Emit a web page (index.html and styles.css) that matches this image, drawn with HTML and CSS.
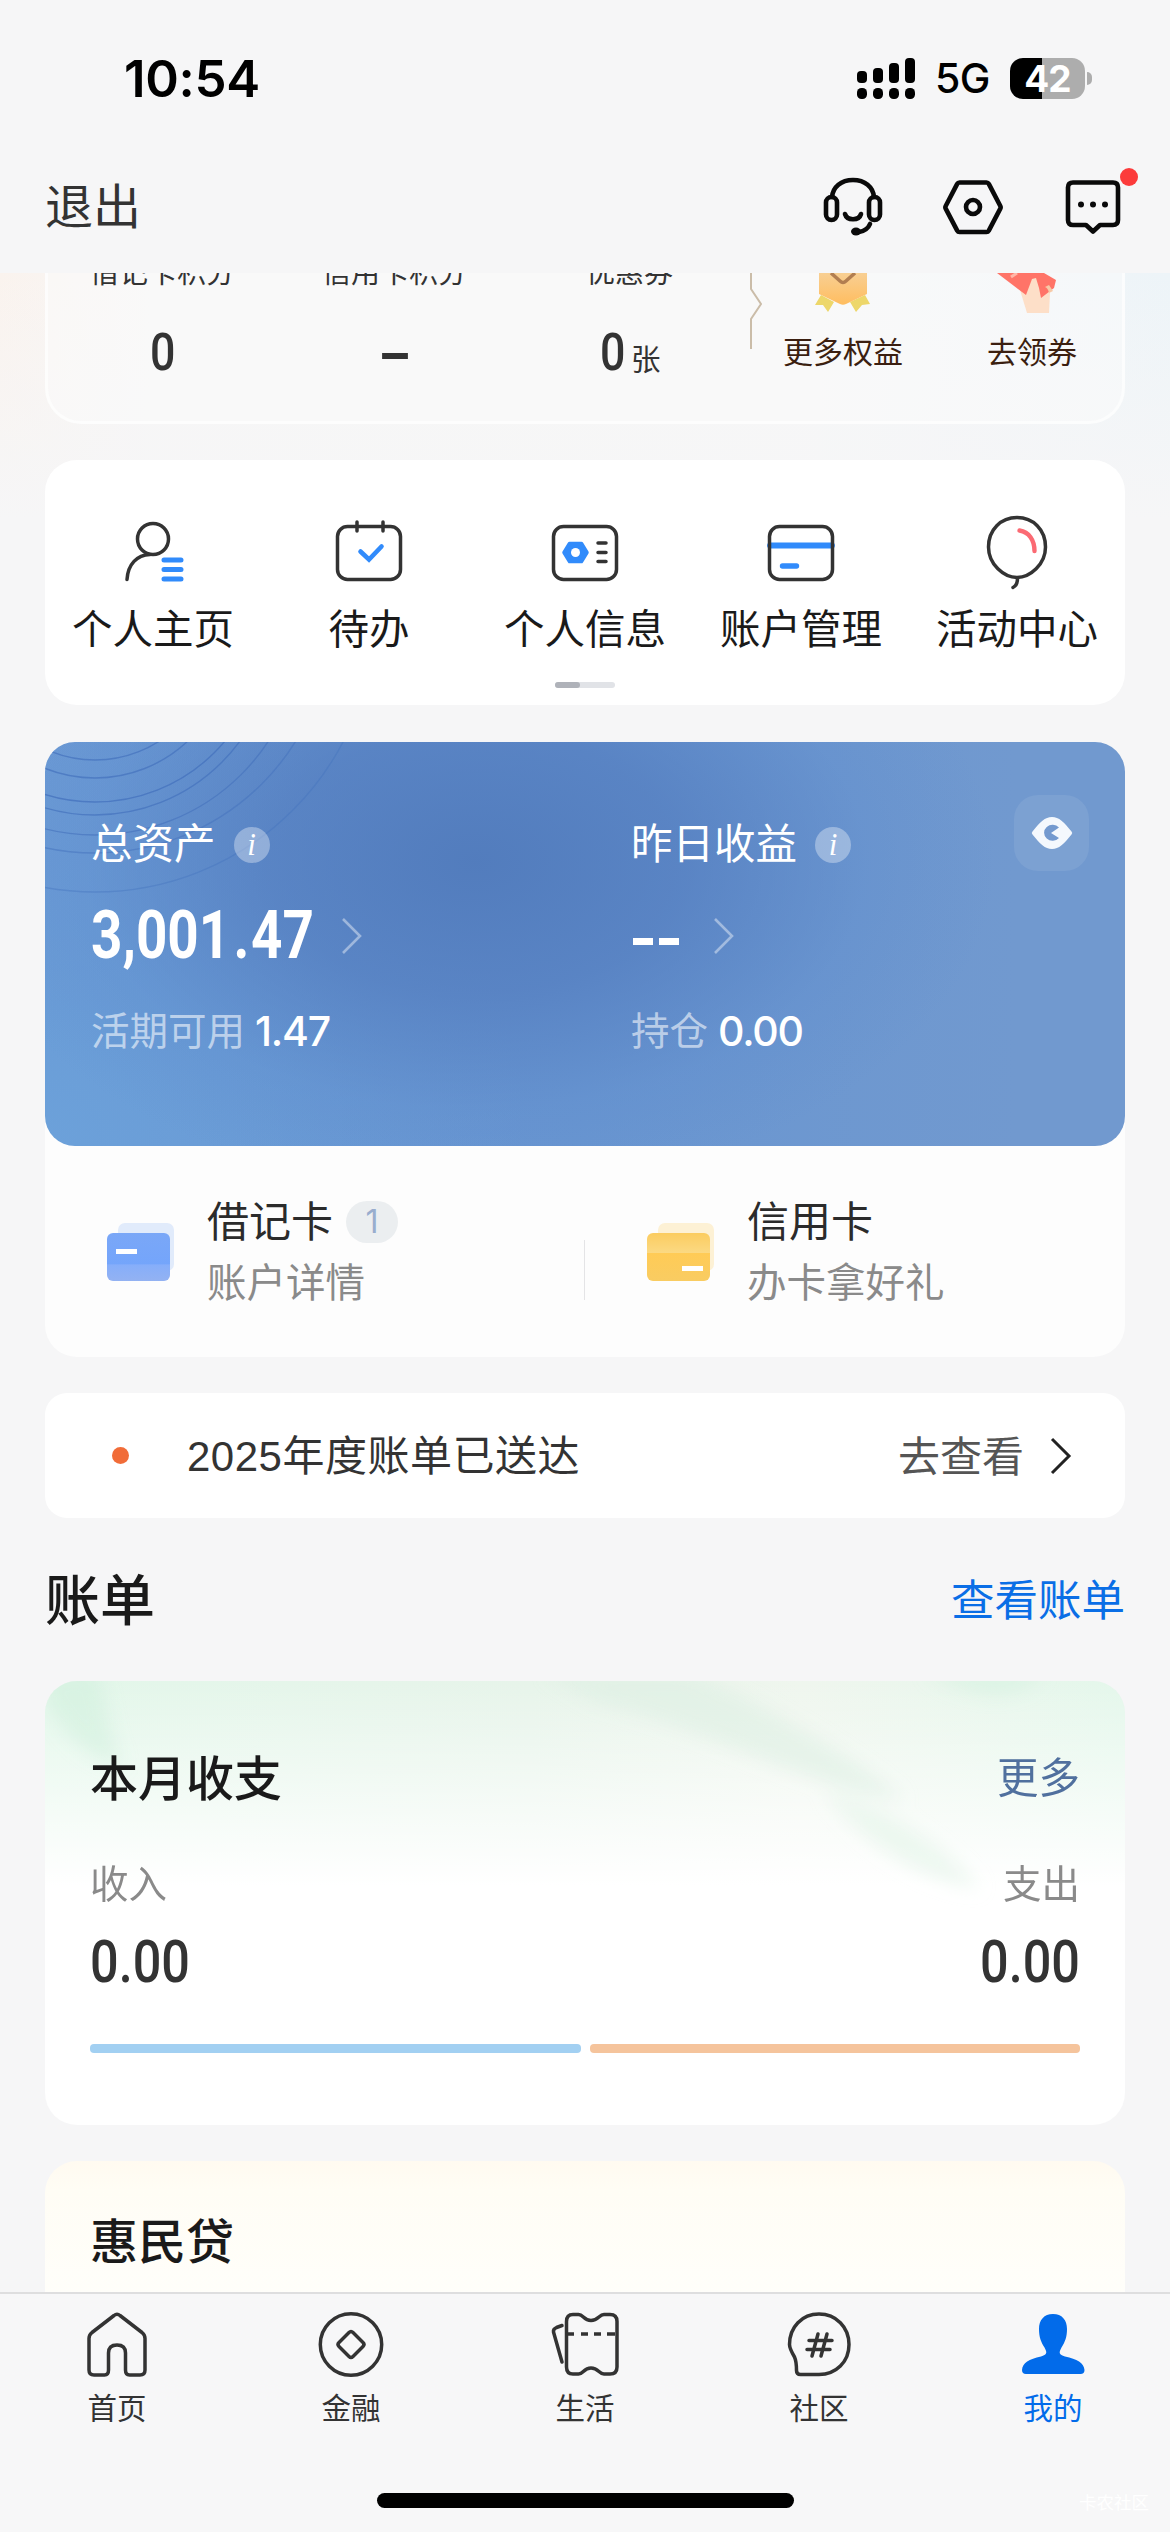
FILE: index.html
```html
<!DOCTYPE html>
<html lang="zh-CN">
<head>
<meta charset="utf-8">
<title>我的</title>
<link rel="stylesheet" href="styles.css">
</head>
<body>
<div class="status">
  <span class="clock">10:54</span>
  <div class="status-right">
    <svg class="signal" width="58" height="41" viewBox="0 0 58 41">
      <rect x="0" y="13" width="10" height="12" rx="4"/><rect x="16" y="10" width="10" height="15" rx="4"/><rect x="32" y="5" width="10" height="20" rx="4"/><rect x="48" y="0" width="10" height="25" rx="4"/>
      <rect x="0" y="30" width="10" height="11" rx="4.5"/><rect x="16" y="30" width="10" height="11" rx="4.5"/><rect x="32" y="30" width="10" height="11" rx="4.5"/><rect x="48" y="30" width="10" height="11" rx="4.5"/>
    </svg>
    <span class="network">5G</span>
    <span class="battery">42</span><span class="nub"></span>
  </div>
</div>
<header class="topbar">
  <span class="logout">退出</span>
  <div class="top-icons">
    <svg width="60" height="60" viewBox="0 0 60 60" fill="none" stroke="#0a0a0a" stroke-width="4.6" stroke-linecap="round">
      <path d="M9 20C10 10 18 3 30 3s20 7 21 17"/><rect x="3" y="20" width="11" height="23" rx="5.5"/><rect x="46" y="20" width="11" height="23" rx="5.5"/><path d="M22 37c2 7 14 7 16 0M47 47c-2 5-5 7-11 8"/><ellipse cx="33" cy="54.500" rx="5" ry="4" fill="#0a0a0a" stroke="none"/>
    </svg>
    <svg width="60" height="60" viewBox="0 0 60 60" fill="none" stroke="#0a0a0a" stroke-width="4.6" stroke-linejoin="round">
      <path d="M16.500 5.500h27q1.500 0 2.300 1.400L57.300 29q.7 1.300 0 2.600L45.800 53.600Q45 55 43.500 55h-27q-1.500 0-2.300-1.400L2.700 31.600q-.7-1.300 0-2.600L14.200 6.900q.8-1.400 2.300-1.400z"/><circle cx="30" cy="30" r="7"/>
    </svg>
    <div class="message">
      <svg width="60" height="60" viewBox="0 0 60 60" fill="none" stroke="#0a0a0a" stroke-width="4.6" stroke-linejoin="round">
        <path d="M10 5.500h40q5 0 5 5V43q0 5-5 5H37l-7 6.500L23 48H10q-5 0-5-5V10.500q0-5 5-5z"/><g fill="#0a0a0a" stroke="none"><circle cx="18" cy="27.500" r="3"/><circle cx="30" cy="27.500" r="3"/><circle cx="42" cy="27.500" r="3"/></g>
      </svg>
      <span class="dot"></span>
    </div>
  </div>
</header>
<main class="page">
  <section class="benefits">
    <div class="points"><span class="points-label">借记卡积分</span><b class="din">0</b></div>
    <div class="points"><span class="points-label">信用卡积分</span><b class="din dash"></b></div>
    <div class="points"><span class="points-label">优惠券</span><span class="coupon"><b class="din">0</b>张</span></div>
    <svg class="split" width="14" height="78" viewBox="0 0 14 78" fill="none" stroke="#cbbda9" stroke-width="2"><path d="M2 0v16l10 15L2 46v30"/></svg>
    <div class="perk">
      <svg width="60" height="42" viewBox="0 0 60 42">
        <defs><linearGradient id="gold" x1="0" y1="0" x2="0" y2="1"><stop offset="0" stop-color="#f8cf93"/><stop offset="1" stop-color="#ffbd5f"/></linearGradient></defs>
        <path d="M8 22l-6 10 8 0 5 7 6-10zM52 22l5 9-8 1-6 7-6-10z" fill="#edd76a"/><path d="M6 0h48v21L33 31q-3 1.500-6 0L6 21z" fill="url(#gold)"/><path d="M18 0l9 8q3 3 6 0l9-8" fill="none" stroke="#b27e50" stroke-width="3.500"/>
      </svg>
      <span>更多权益</span>
    </div>
    <div class="perk">
      <svg width="64" height="42" viewBox="0 0 64 42">
        <path d="M23 17l7 23h22l1-20-7-14-8-3z" fill="#fddfc8"/><path d="M0 0h47l12 7-2 8-13 10-2-10-3-10-4 1-6 16z" fill="#ff7468"/><path d="M48 14q3 1 4 6l4-2-4-6z" fill="#f7c9a7"/><path d="M14 4l6-4" stroke="#ffb7a8" stroke-width="3"/>
      </svg>
      <span>去领券</span>
    </div>
  </section>

  <section class="menu">
    <div class="menu-row">
      <div class="menu-item">
        <svg width="80" height="80" viewBox="0 0 80 80" fill="none" stroke="#333" stroke-width="3.500" stroke-linecap="round"><circle cx="40" cy="25" r="15.500"/><path d="M14 65.500C15 50 24 41 37 40.500"/><path d="M51 46h17M51 55.500h17M51 65h17" stroke="#318bfb" stroke-width="5"/></svg>
        <span>个人主页</span>
      </div>
      <div class="menu-item">
        <svg width="80" height="80" viewBox="0 0 80 80" fill="none" stroke="#333" stroke-width="3.500" stroke-linecap="round"><rect x="8.500" y="12.500" width="63" height="53" rx="10"/><path d="M28 8v9M54 8v9"/><path d="M31.500 37.500l8.500 8 12.500-13" stroke="#318bfb" stroke-width="4.600"/></svg>
        <span>待办</span>
      </div>
      <div class="menu-item">
        <svg width="80" height="80" viewBox="0 0 80 80" fill="none" stroke="#333" stroke-width="3.500" stroke-linecap="round"><rect x="8.500" y="12.500" width="63" height="53" rx="10"/><path d="M53 29h8M53 38.500h8M53 47.500h8"/><path d="M24.500 29.500h12l5.500 9-5.500 9h-12l-5.500-9z" fill="#318bfb" stroke="#318bfb" stroke-linejoin="round"/><circle cx="30.500" cy="38.500" r="4.500" fill="#fff" stroke="none"/></svg>
        <span>个人信息</span>
      </div>
      <div class="menu-item">
        <svg width="80" height="80" viewBox="0 0 80 80" fill="none" stroke="#333" stroke-width="3.500" stroke-linecap="round"><path d="M9 31.500h62" stroke="#318bfb" stroke-width="5.800"/><rect x="8.500" y="12.500" width="63" height="53" rx="10"/><path d="M21.500 52h14" stroke="#318bfb" stroke-width="5.400"/></svg>
        <span>账户管理</span>
      </div>
      <div class="menu-item">
        <svg width="80" height="80" viewBox="0 0 80 80" fill="none" stroke="#333" stroke-width="3.500" stroke-linecap="round"><path d="M40 3.500c16 0 28.500 12 28.500 29.500S53 63.500 40 63.500 11.500 50.500 11.500 33 24 3.500 40 3.500z"/><path d="M40.500 64c0 5-1 8-4.500 9.500"/><path d="M42.500 16.500C52 18 57.500 26 57.500 37" stroke="#fb6a73" stroke-width="4.400"/></svg>
        <span>活动中心</span>
      </div>
    </div>
    <div class="pager"><i></i></div>
  </section>

  <section class="wealth">
    <div class="assets">
      <svg class="ripples" width="320" height="160" viewBox="0 0 320 160" fill="none" stroke="#4472bd" stroke-width="1.400"><circle cx="50" cy="-101" r="119" opacity=".7"/><circle cx="50" cy="-99" r="135" opacity=".7"/><circle cx="50" cy="-109" r="169" opacity=".75"/><circle cx="50" cy="-106" r="179" opacity=".7"/><circle cx="50" cy="-114" r="207" opacity=".6"/><circle cx="50" cy="-125" r="236" opacity=".5"/><circle cx="50" cy="-130" r="280" opacity=".4"/></svg>
      <div class="asset">
        <div class="asset-title">总资产<i class="info">i</i></div>
        <div class="asset-value"><b class="total">3,001<span class="point">.</span>47</b><svg width="22" height="38" viewBox="0 0 22 38" fill="none" stroke="#fff" stroke-opacity=".42" stroke-width="2.600"><path d="M2 2l17 17L2 36"/></svg></div>
        <div class="asset-sub">活期可用<em>1.47</em></div>
      </div>
      <div class="asset">
        <div class="asset-title">昨日收益<i class="info">i</i></div>
        <div class="asset-value"><span class="dashes"><i></i><i></i></span><svg width="22" height="38" viewBox="0 0 22 38" fill="none" stroke="#fff" stroke-opacity=".42" stroke-width="2.600"><path d="M2 2l17 17L2 36"/></svg></div>
        <div class="asset-sub">持仓<em>0.00</em></div>
      </div>
      <div class="eye"><svg width="42" height="32" viewBox="0 0 42 32"><path d="M1.500 17.500q-1.500-1.500 0-3C9 5 14 0 21 0s12 5 19.500 14.500q1.500 1.500 0 3C33 27 28 32 21 32S9 27 1.500 17.500z" fill="#f4f8fd"/><path d="M20 16l8-5.500A8.500 8 0 1 0 28 21z" fill="#7399cf"/></svg></div>
    </div>
    <div class="cards">
      <div class="bank-card">
        <svg width="70" height="62" viewBox="0 0 70 62"><defs><linearGradient id="blue" x1="0" y1="0" x2="0" y2="1"><stop offset="0" stop-color="#7aa7f7"/><stop offset=".65" stop-color="#74a5fb"/><stop offset=".66" stop-color="#86aefa"/><stop offset="1" stop-color="#93b2f2"/></linearGradient></defs><rect x="12" y="1" width="56" height="48" rx="7" fill="#e1ebfb"/><rect x="1" y="11" width="63" height="48" rx="6" fill="url(#blue)"/><rect x="10" y="27" width="21" height="5" fill="#fff"/></svg>
        <div class="bank-text"><div class="bank-name">借记卡<span class="count">1</span></div><div class="bank-desc">账户详情</div></div>
      </div>
      <div class="bank-card credit">
        <svg width="70" height="62" viewBox="0 0 70 62"><defs><linearGradient id="yellow" x1="0" y1="0" x2="0" y2="1"><stop offset="0" stop-color="#fbcc60"/><stop offset=".41" stop-color="#fbd982"/><stop offset=".42" stop-color="#ffcb56"/><stop offset="1" stop-color="#f9cc62"/></linearGradient></defs><rect x="12" y="1" width="56" height="48" rx="7" fill="#fdf1d5"/><rect x="1" y="11" width="63" height="48" rx="6" fill="url(#yellow)"/><rect x="36" y="44" width="21" height="5" fill="#fff"/></svg>
        <div class="bank-text"><div class="bank-name">信用卡</div><div class="bank-desc">办卡拿好礼</div></div>
      </div>
    </div>
  </section>

  <section class="notice"><i class="bullet"></i><span class="notice-text">2025年度账单已送达</span><span class="notice-link">去查看</span><svg width="22" height="38" viewBox="0 0 22 38" fill="none" stroke="#222" stroke-width="3"><path d="M2 2l17 17L2 36"/></svg></section>

  <div class="section-head"><h2>账单</h2><a>查看账单</a></div>

  <section class="bill">
    <svg class="leaves" width="1080" height="230" viewBox="0 0 1080 230"><defs><filter id="soft" x="-20%" y="-20%" width="140%" height="140%"><feGaussianBlur stdDeviation="9"/></filter></defs><g filter="url(#soft)"><path d="M500-10h140c90 40 160 80 220 130-100-15-190-70-310-100z" fill="#dbeee1" opacity=".55"/><path d="M780 110c70 20 125 60 155 98-65-10-120-50-155-98z" fill="#e3f3e7" opacity=".6"/><path d="M0-10h50c15 30 10 60 28 95C35 75 15 45 0 20z" fill="#c9eed9" opacity=".45"/><path d="M880-10h120c-20 30-70 30-120 0z" fill="#d2f1df" opacity=".6"/></g></svg>
    <div class="bill-row bill-head"><h3>本月收支</h3><a>更多</a></div>
    <div class="bill-row bill-labels"><span>收入</span><span>支出</span></div>
    <div class="bill-row bill-values"><b>0.00</b><b class="out">0.00</b></div>
    <div class="bars"><i class="in"></i><i class="spent"></i></div>
  </section>

  <section class="loan"><h3>惠民贷</h3></section>
</main>
<nav class="tabs">
  <div class="tab-row">
    <div class="tab"><svg width="72" height="70" viewBox="0 0 72 70" fill="none" stroke="#333" stroke-width="3.500" stroke-linejoin="round"><path d="M33 6.500q3-2.500 6 0l22 17q3 2.500 3 6V61q0 5-5 5H48.500q-4 0-4-5V44q0-8-8.500-8t-8.500 8v17q0 5-4 5H13q-5 0-5-5V29.500q0-3.500 3-6z"/></svg><span>首页</span></div>
    <div class="tab"><svg width="72" height="70" viewBox="0 0 72 70" fill="none" stroke="#333" stroke-width="3.500" stroke-linejoin="round"><circle cx="36" cy="35.500" r="30.700"/><path d="M34 23.500q2-2 4 0l10 10q2 2 0 4l-10 10q-2 2-4 0l-10-10q-2-2 0-4z"/></svg><span>金融</span></div>
    <div class="tab"><svg width="72" height="70" viewBox="0 0 72 70" fill="none" stroke="#333" stroke-width="3.500" stroke-linejoin="round" stroke-linecap="round"><path d="M24 5.500h5.500c5 0 5 6 12.500 6s8-6 13-6H61q7 0 7 7V58q0 7-7 7h-6c-5 0-5.500-6-13-6s-7.500 6-12.500 6H24q-6.500 0-6.500-7V12.500q0-7 6.500-7z"/><path d="M19 25h6M32 25h7M45 25h7M58 25h8" stroke-linecap="butt"/><path d="M13 16.500l-5.500 2Q4 20 4.500 23L13 53"/></svg><span>生活</span></div>
    <div class="tab"><svg width="72" height="70" viewBox="0 0 72 70" fill="none" stroke="#333" stroke-width="3.500" stroke-linejoin="round" stroke-linecap="round"><path d="M36 5C53 5 66 18 66 35.500S53 65.500 36 65.500H17.500q-4 0-4-4c0-6 0-9-2-13.500C8 42 6.500 39 6.500 35.500 6.500 18 19 5 36 5z"/><path d="M35 25l-6 22M44 25l-6 22M26 31.500h23M24 40.500h23"/></svg><span>社区</span></div>
    <div class="tab active"><svg width="72" height="70" viewBox="0 0 72 70" fill="#026bea"><path d="M36 5c9 0 14 6 14 15 0 8-2 13-5.500 18.500-3 5.500-2.500 7 3.500 9C60 50 67 54 67.500 61q0 4-4 4H9q-4 0-4-4C5.500 54 12 50 24 47.500c6-2 6.500-3.500 3.500-9C24 33 22 28 22 20c0-9 5-15 14-15z"/></svg><span>我的</span></div>
  </div>
  <div class="home-indicator"></div>
  <span class="watermark">卡农社区</span>
</nav>
</body>
</html>
```
FILE: styles.css
```css
* { box-sizing: border-box; }
body {
  margin: 0;
  width: 1170px;
  height: 2532px;
  overflow: hidden;
  display: flex;
  flex-direction: column;
  background: #f6f6f7;
  color: #1a1a1a;
  font-family: Inter, "Noto Sans CJK SC", sans-serif;
  line-height: 1;
}
h2, h3, b { margin: 0; font-weight: 500; }
i, em { font-style: normal; }
svg { display: block; flex: none; }

.status { height: 156px; padding: 0 78px 0 124px; display: flex; justify-content: space-between; align-items: center; color: #000; }
.clock { font-size: 51px; font-weight: 600; letter-spacing: -0.3px; }
.status-right { display: flex; align-items: center; }
.network { margin-left: 20px; width: 75px; font-size: 41px; font-weight: 500; letter-spacing: -0.5px; white-space: nowrap; }
.battery { width: 75px; height: 41px; border-radius: 13px; background: linear-gradient(90deg, #000 43%, #adadad 43%); color: #fff; font-size: 37px; font-weight: 700; line-height: 42px; text-align: center; letter-spacing: -1px; }
.nub { width: 5px; height: 13px; margin-left: 2px; border-radius: 0 5px 5px 0; background: #adadad; }

.topbar { height: 117px; padding: 0 47px 15px 45px; display: flex; justify-content: space-between; align-items: center; }
.logout { font-size: 48px; color: #333; }
.top-icons { display: flex; gap: 60px; }
.message { position: relative; }
.dot { position: absolute; left: 57px; top: -9px; width: 18px; height: 18px; border-radius: 50%; background: #fc3b3b; }

.page {
  height: 2019px;
  padding: 0 45px;
  overflow: hidden;
  background:
    linear-gradient(180deg, rgba(246,246,247,0) 0, #f6f6f7 246px),
    linear-gradient(90deg, #faf3ee 0, #f7f6f6 150px, #f7f7f7 780px, #edf4f8 1170px);
  background-size: 100% 246px;
  background-repeat: no-repeat;
}

.benefits { height: 151px; display: flex; border: 3px solid rgba(255,255,255,.65); border-top: 0; border-radius: 0 0 36px 36px; background: rgba(252,252,252,.5); }
.points { width: 235px; display: flex; flex-direction: column; align-items: center; color: #333; }
.points:first-child { width: 229px; }
.points-label { margin-top: -15px; font-size: 29px; line-height: 30px; }
.din { font-family: Roboto, sans-serif; font-size: 52px; font-weight: 500; margin-top: 27px; line-height: 76px; transform: scaleX(.86); display: block; }
.dash { width: 30px; height: 6px; margin-top: 65px; background: #333; }
.coupon { display: flex; align-items: baseline; font-size: 29.500px; gap: 3px; }
.split { margin-left: 2px; }
.perk { flex: 1; display: flex; flex-direction: column; align-items: center; color: #3b1f10; font-size: 30px; padding-right: 11px; }
.perk + .perk { flex: 0 0 188px; padding: 0 0 0 8px; }
.perk + .perk svg { margin-left: -6px; }
.perk span { margin-top: 22px; line-height: 30px; }

.menu { margin-top: 36px; height: 245px; border-radius: 32px; background: #fff; display: flex; flex-direction: column; align-items: center; }
.menu-row { width: 100%; display: grid; grid-template-columns: repeat(5, 216px); padding-top: 54px; }
.menu-item { display: flex; flex-direction: column; align-items: center; font-size: 40.500px; gap: 16px; }
.pager { margin-top: 31px; width: 60px; height: 6px; border-radius: 3px; background: #e1e3e7; }
.pager i { display: block; width: 25px; height: 6px; border-radius: 3px; background: #afb2b9; }

.wealth { margin-top: 37px; height: 615px; border-radius: 32px; background: #fdfdfd; }
.assets {
  position: relative;
  height: 404px;
  padding-left: 46px;
  display: flex;
  border-radius: 30px;
  overflow: hidden;
  color: #fff;
  background:
    radial-gradient(ellipse 520px 330px at 430px 120px, rgba(81,123,188,.95), rgba(84,126,192,.75) 40%, rgba(92,138,204,.3) 75%, rgba(96,142,206,0)),
    radial-gradient(circle at 0 100%, #6ca1da, rgba(100,150,212,0) 480px),
    radial-gradient(circle at 0 0, #6c99d4, rgba(100,150,212,0) 260px),
    linear-gradient(90deg, #6693d0 0, #6996d1 50%, #7199cf 90%);
}
.ripples { position: absolute; left: 0; top: 0; }
.asset { position: relative; flex: none; width: 540px; padding-top: 82px; }
.asset-title { display: flex; align-items: center; height: 42px; font-size: 41.500px; }
.info { margin-left: 18px; width: 36px; height: 36px; border-radius: 50%; background: rgba(255,255,255,.34); font: italic 31px/35px "Liberation Serif", serif; text-align: center; }
.asset-value { display: flex; align-items: center; height: 66px; margin-top: 37px; }
.total { font-family: Roboto, sans-serif; font-size: 66px; font-weight: 700; width: 250px; transform: scaleX(.83); transform-origin: 0 50%; white-space: nowrap; }
.point { margin: 0 2px 0 4px; }
.dashes { display: flex; gap: 6px; width: 82px; padding: 10px 0 0 2px; }
.dashes i { width: 20px; height: 7px; background: #fff; }
.asset-sub { margin-top: 41px; height: 42px; display: flex; align-items: center; font-size: 38.500px; color: rgba(255,255,255,.58); }
.asset-sub em { margin-left: 10px; color: #fff; font-size: 41px; font-weight: 500; letter-spacing: -1.200px; }
.eye { position: absolute; left: 969px; top: 53px; width: 75px; height: 76px; border-radius: 24px; background: rgba(255,255,255,.08); display: flex; align-items: center; justify-content: center; }

.cards { display: flex; height: 211px; }
.bank-card { position: relative; width: 540px; padding: 55px 0 0 61px; display: flex; }
.bank-card > svg { margin-top: 21px; }
.bank-card:first-child { background: linear-gradient(#e4e4e6, #e4e4e6) 539px 94px / 1px 60px no-repeat; }
.bank-text { margin-left: 31px; }
.bank-name { height: 42px; display: flex; align-items: center; font-size: 42px; color: #2b2b2b; }
.count { margin-left: 13px; width: 52px; height: 42px; border-radius: 21px; background: #ebeef0; color: #99adce; font-size: 32px; line-height: 42px; text-align: center; }
.bank-desc { margin-top: 21px; font-size: 39.500px; color: #8a8a8a; }

.notice { margin-top: 36px; height: 125px; padding: 0 53px 0 67px; display: flex; align-items: center; border-radius: 22px; background: #fff; font-size: 42px; }
.bullet { width: 17px; height: 17px; border-radius: 50%; background: #f16c38; }
.notice-text { margin-left: 58px; padding-top: 2px; flex: 1; color: #333; font-family: "Liberation Sans", "Noto Sans CJK SC", sans-serif; letter-spacing: .5px; }
.notice-link { margin-right: 26px; padding-top: 2px; color: #555; }

.section-head { height: 163px; padding-top: 2px; display: flex; align-items: center; justify-content: space-between; }
.section-head h2 { font-size: 55px; }
.section-head a { font-size: 43.500px; color: #0a6ee6; }

.bill {
  position: relative;
  height: 444px;
  padding: 0 45px;
  border-radius: 32px;
  overflow: hidden;
  background: linear-gradient(180deg, rgba(255,255,255,0), #fff 205px), linear-gradient(90deg, #e3f7ea 0, #e7f4ea 45%, #eff6ee 70%, #e4f7eb 100%);
}
.leaves { position: absolute; left: 0; top: 0; }
.bill-row { position: relative; display: flex; justify-content: space-between; align-items: center; }
.bill-head { padding-top: 73px; height: 123px; }
.bill-head h3, .loan h3 { font-size: 48px; }
.bill-head a { font-size: 41.500px; color: #50709e; }
.bill-labels { margin-top: 60px; height: 40px; font-size: 38.500px; color: #8a8a8a; }
.bill-values { margin-top: 28px; height: 60px; }
.bill-values b { font-family: Roboto, sans-serif; font-size: 60px; color: #333; transform: scaleX(.84); transform-origin: 0 50%; }
.bill-values .out { transform-origin: 100% 50%; }
.bars { margin-top: 52px; display: grid; grid-template-columns: 1fr 1fr; gap: 9px; }
.bars i { height: 9px; border-radius: 4px; }
.in { background: #a2d0f2; }
.spent { background: #f5c49c; }

.loan { margin-top: 36px; height: 240px; padding: 57px 45px 0; border-radius: 32px 32px 0 0; background: linear-gradient(180deg, #fffaf0 0, #fffdf5 30px, #fffefa 131px); }

.tabs { position: relative; height: 240px; border-top: 2px solid #dededf; background: #f7f7f8; }
.tab-row { display: grid; grid-template-columns: repeat(5, 1fr); padding-top: 15px; }
.tab { display: flex; flex-direction: column; align-items: center; gap: 15px; font-size: 29.500px; color: #333; }
.tab.active { color: #026bea; }
.home-indicator { width: 417px; height: 15px; margin: 69px auto 0; border-radius: 8px; background: #000; }
.watermark { position: absolute; right: 21px; bottom: 21px; font-size: 17.500px; color: #fff; }
```
